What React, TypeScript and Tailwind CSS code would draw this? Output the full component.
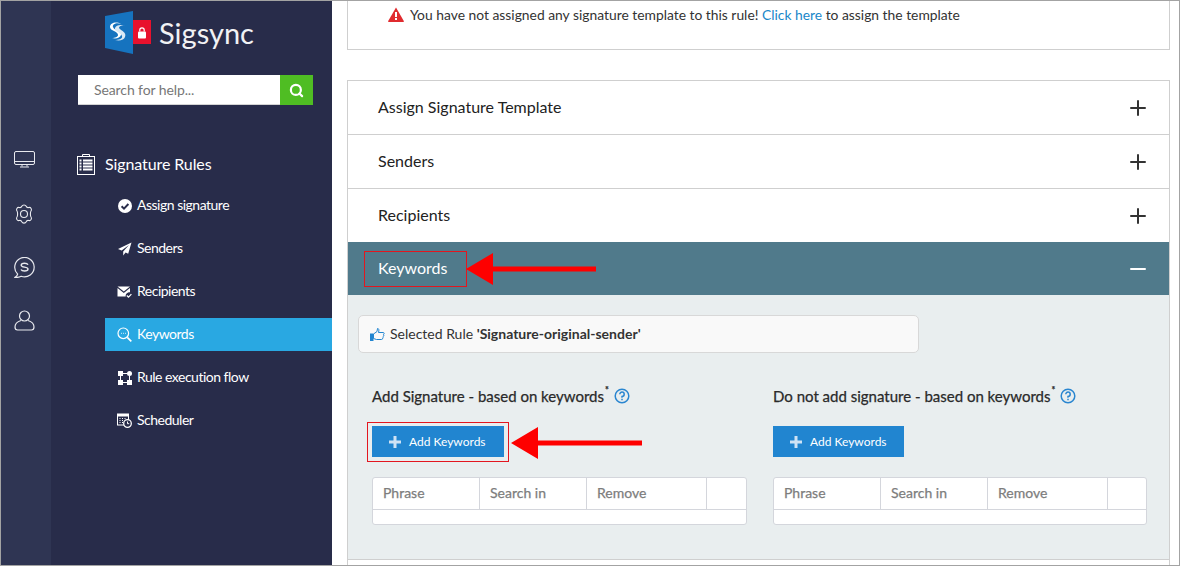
import React from "react";
import { Plus, Minus, Search } from "lucide-react";

const NavIcon = ({ name }: { name: string }) => {
  switch (name) {
    case "check":
      return (
        <svg width="14" height="14" viewBox="0 0 14 14">
          <circle cx="7" cy="7" r="7" fill="#fff" />
          <path d="M3.6 7.2 6 9.6l4.4-4.6" fill="none" stroke="#282c4a" strokeWidth="2" />
        </svg>
      );
    case "plane":
      return (
        <svg width="14" height="14" viewBox="0 0 14 14">
          <path d="M13.5.5 0 7l3.6 1.6L11 3 5.2 9.6V13.6l2.400-3 2.600 1.200z" fill="#fff" />
        </svg>
      );
    case "mail":
      return (
        <svg width="15" height="14" viewBox="0 0 15 14">
          <path d="M.5 1.500h12.500L6.800 6.500z" fill="#fff" />
          <path d="M.5 3v8.500h8.200c-.3-2.500 1.500-4.300 4.300-4.300V3L6.800 8z" fill="#fff" />
          <path d="M9.800 10.500l1.700 1.700 2.900-3" fill="none" stroke="#fff" strokeWidth="1.200" />
        </svg>
      );
    case "search":
      return (
        <svg width="15" height="15" viewBox="0 0 15 15" fill="none" stroke="#fff">
          <circle cx="6.300" cy="6.300" r="5.300" strokeWidth="1.200" />
          <path d="m10.300 10.300 4 4" strokeWidth="1.700" />
          <path d="M4 6.300h.8M6 6.300h.8M8 6.300h.8" strokeWidth="1" />
        </svg>
      );
    case "flow":
      return (
        <svg width="14" height="14" viewBox="0 0 14 14" fill="#fff">
          <rect x="0" y="0" width="5" height="5" />
          <circle cx="11.500" cy="2.500" r="2.500" />
          <rect x="0" y="9" width="5" height="5" />
          <rect x="9" y="9" width="5" height="5" />
          <rect x="5" y="2" width="4" height="1" />
          <rect x="2" y="5" width="1" height="4" />
          <rect x="5" y="11" width="4" height="1" />
          <rect x="11" y="5" width="1" height="4" />
        </svg>
      );
    default:
      return (
        <svg width="15" height="15" viewBox="0 0 15 15">
          <rect x=".5" y="1" width="11" height="11" fill="none" stroke="#fff" />
          <rect x=".5" y="1" width="11" height="2.500" fill="#fff" />
          <path d="M2.500 5.500h1M5 5.500h1M7.500 5.500h1M2.500 7.500h1M5 7.500h1M2.500 9.500h1M5 9.500h1" stroke="#fff" />
          <circle cx="10.500" cy="10.500" r="3.800" fill="#282c4a" stroke="#fff" strokeWidth="1.300" />
          <path d="M10.500 8.500v2.200h1.700" fill="none" stroke="#fff" />
        </svg>
      );
  }
};

const Rail = () => (
  <div className="w-[50px] shrink-0 bg-[#2f3553] flex flex-col items-center pt-[131px] pr-[4px]">
    <div className="h-[54px] flex items-center">
      <svg width="21" height="17" viewBox="0 0 21 17" fill="none" stroke="#e8e9ee" strokeWidth="1">
        <rect x=".5" y=".5" width="20" height="13" rx="1.500" />
        <path d="M.5 10.500h20M8 14v1.500M13 14v1.500M6 16h9" />
      </svg>
    </div>
    <div className="h-[53px] mt-[1px] flex items-center">
      <svg width="18" height="20" viewBox="0 0 18 20" fill="none" stroke="#e8e9ee" strokeWidth="1.100">
        <path d="M6.800 2.200C7.500.5 10.500.5 11.200 2.200 11.600 3.300 12.800 3.800 13.900 3.500 15.700 3 17.300 5.600 16 7 15.200 7.900 15.200 12.100 16 13 17.300 14.400 15.700 17 13.900 16.500 12.800 16.200 11.600 16.700 11.200 17.800 10.500 19.500 7.500 19.500 6.800 17.800 6.400 16.700 5.200 16.200 4.100 16.500 2.300 17 .7 14.400 2 13 2.800 12.100 2.800 7.900 2 7 .7 5.600 2.300 3 4.100 3.500 5.200 3.800 6.400 3.300 6.800 2.200z" />
        <circle cx="9" cy="10" r="3.500" />
      </svg>
    </div>
    <div className="h-[54px] flex items-center">
      <svg width="21" height="21" viewBox="0 0 21 21" fill="none" stroke="#e8e9ee" strokeWidth="1.200">
        <path d="M3.640 17.060A9.700 9.700 0 1 1 7.200 19.300C5.500 20.300 3 20.600 1 20.300 2.500 19.500 3.400 18.500 3.640 17.060z" />
        <path d="M14 7.800C13.500 6.700 12.200 6.300 10.500 6.300 8.500 6.300 7.200 7 7.200 8.200 7.200 10.800 14 9.400 14 12.100 14 13.300 12.600 14 10.500 14 8.800 14 7.500 13.500 7 12.500" strokeWidth="1.400" />
      </svg>
    </div>
    <div className="h-[53px] flex items-center">
      <svg width="21" height="21" viewBox="0 0 21 21" fill="none" stroke="#e8e9ee" strokeWidth="1.200">
        <circle cx="10.500" cy="6" r="5" />
        <path d="M7 10.500C3.500 11.500 1 13.500 1 17c0 1.800 1 3 2.500 3h14c1.500 0 2.500-1.200 2.500-3 0-3.500-2.500-5.500-6-6.500" />
      </svg>
    </div>
  </div>
);

const items = [
  { n: "check", t: "Assign signature" },
  { n: "plane", t: "Senders" },
  { n: "mail", t: "Recipients" },
  { n: "search", t: "Keywords", active: true },
  { n: "flow", t: "Rule execution flow" },
  { n: "clock", t: "Scheduler" },
];

const Sidebar = () => (
  <div className="w-[281px] shrink-0 bg-[#282c4a] flex flex-col text-white">
    <div className="flex items-center pl-[54px] h-[53px] pt-[9px]">
      <svg width="47" height="43" viewBox="0 0 47 43" className="shrink-0">
        <path d="M0 5 28 0v43L0 37z" fill="#1673bf" />
        <path d="M16 13c-4-2-9 0-8 3 1 4 9 3 8 8-1 3-5 4-9 3 3 0 6-1 6-3 0-4-8-4-8-8 0-4 6-6 11-3z" fill="#fff" />
        <path d="M20 15c-3-1-6 0-6 2 2 3 8 4 6 9-1 3-5 4-10 3 3 0 8-1 7-4-1-4-8-4-7-8 1-3 6-4 10-2z" fill="#dbe9f5" />
        <rect x="28" y="9" width="18" height="24" fill="#e8112d" />
        <rect x="33" y="20.500" width="8" height="7" rx="1" fill="#fff" />
        <path d="M34.800 20.500v-1.500a2.200 2.200 0 0 1 4.400 0v1.500" fill="none" stroke="#fff" strokeWidth="1.200" />
      </svg>
      <span className="ml-[7px] text-[29px] leading-none text-[#f1f2f5]">Sigsync</span>
    </div>
    <div className="mt-[21px] ml-[27px] flex h-[30px] w-[235px]">
      <div className="flex-1 bg-white border-b border-[#d4d4d4] flex items-center pl-[16px] pb-[1px] text-[14px] tracking-[-0.1px] text-[#777]">Search for help...</div>
      <div className="w-[33px] bg-[#4fbd23] flex items-center justify-center">
        <Search size={15} strokeWidth={3.500} color="#fff" />
      </div>
    </div>
    <div className="mt-[48px] ml-[26px] flex items-center h-[22px] gap-[10px]">
      <svg width="18" height="21" viewBox="0 0 18 21" fill="none" stroke="#fff">
        <rect x=".5" y="2.500" width="17" height="18" />
        <path d="M5.500 2.500V.5h7v2" />
        <path d="M2.500 6.500h2M6 6.500h9.500M2.500 9.500h2M6 9.500h9.500M2.500 12.500h2M6 12.500h9.500M2.500 15.500h2M6 15.500h9.500" strokeWidth="1.800" />
      </svg>
      <span className="text-[16px] tracking-[-0.1px]">Signature Rules</span>
    </div>
    <div className="mt-[14px] ml-[54px] flex flex-col gap-[10px]">
      {items.map((i) => (
        <div key={i.t} className={`h-[33px] flex items-center pl-[12px] gap-[5px] text-[14px] tracking-[-0.5px] ${i.active ? "bg-[#29a8e2]" : ""}`}>
          <span className="w-[15px] flex justify-center shrink-0"><NavIcon name={i.n} /></span>
          <span className="pb-[2px]">{i.t}</span>
        </div>
      ))}
    </div>
  </div>
);

const Row = ({ t }: { t: string }) => (
  <div className="h-[54px] border-b border-[#cfcfcf] bg-white flex items-center justify-between pl-[30px] pr-[19px] text-[16px] text-[#222]">
    <span className="pb-[2px]">{t}</span>
    <Plus size={24} strokeWidth={2} color="#333" />
  </div>
);

const Column = ({ title, boxed, width }: { title: string; boxed?: boolean; width: string }) => (
  <div className={width}>
    <div className="flex items-center h-[24px] text-[15px] [-webkit-text-stroke:0.25px] text-[#2a2a2a]">
      <span>{title}</span>
      <sup className="text-[9px] -mt-[3px] ml-[1px] font-bold">*</sup>
      <svg width="16" height="16" viewBox="0 0 16 16" fill="none" stroke="#2a86d0" className="ml-[5px]">
        <circle cx="8" cy="8" r="6.800" strokeWidth="1.500" />
        <path d="M5.800 6.300A2.200 2.200 0 1 1 8 8.500v1.200" strokeWidth="1.500" />
        <path d="M8 10.800v1.500" strokeWidth="1.500" />
      </svg>
    </div>
    <div className={`mt-[18px] relative h-[31px] bg-[#2185d0] flex items-center pl-[17px] gap-[8px] text-white text-[12px] ${boxed ? "w-[132px]" : "w-[131px]"}`}>
      <svg width="12" height="12" viewBox="0 0 12 12" fill="#cfe3f5"><path d="M4.500 0h3v4.500H12v3H7.500V12h-3V7.500H0v-3h4.500z" /></svg>
      <span>Add Keywords</span>
      {boxed && (
        <>
          <div className="absolute -left-[5px] -top-[4px] w-[142px] h-[40px] border border-[#e3161f]" />
          <Arrow className="absolute left-[139px] top-[1px]" w={131} />
        </>
      )}
    </div>
    <div className="mt-[20px] h-[48px] rounded-[3px] border border-[#d4d6dc] bg-white overflow-hidden">
      <div className="flex h-[32px] border-b border-[#d4d6dc] text-[14px] [-webkit-text-stroke:0.25px] text-[#7d7d7d]">
        <div className="w-[107px] border-r border-[#d4d6dc] pl-[10px] pb-[3px] flex items-center">Phrase</div>
        <div className="w-[107px] border-r border-[#d4d6dc] pl-[10px] pb-[3px] flex items-center">Search in</div>
        <div className="w-[120px] border-r border-[#d4d6dc] pl-[10px] pb-[3px] flex items-center">Remove</div>
      </div>
    </div>
  </div>
);

const Arrow = ({ className, w }: { className: string; w: number }) => (
  <svg width={w} height="32" viewBox={`0 0 ${w} 32`} className={className}>
    <path d={`M0 16 27 0v13.500H${w}v5H27V32z`} fill="#fe0000" />
  </svg>
);

export default function App() {
  return (
    <div className="w-[1180px] h-[566px] border border-[#a3a3a3] flex overflow-hidden bg-white" style={{ fontFamily: "Lato, 'Open Sans', sans-serif" }}>
      <Rail />
      <Sidebar />
      <div className="flex-1 pl-[15px] pr-[9px] min-w-0">
        <div className="h-[49px] border border-t-0 border-[#cfcfcf] flex items-start pl-[40px] pt-[4px] text-[13.850px] text-[#333] gap-[6px]">
          <svg width="16" height="15" viewBox="0 0 16 15" className="shrink-0 mt-[2px]">
            <path d="M8 .5 15.800 14a.7.7 0 0 1-.6 1H.8a.7.7 0 0 1-.6-1z" fill="#e02b2f" />
            <path d="M7 5h2v5H7zM7 11h2v2H7z" fill="#fff" />
          </svg>
          <span>You have not assigned any signature template to this rule! <span className="text-[#1a87c9]">Click here</span> to assign the template</span>
        </div>
        <div className="mt-[30px] border border-b-0 border-[#cfcfcf]">
          <Row t="Assign Signature Template" />
          <Row t="Senders" />
          <Row t="Recipients" />
          <div className="relative h-[53px] -mt-[1px] bg-[#507a8b] flex items-center justify-between pl-[30px] pr-[19px] text-white text-[16px]">
            <span className="pb-[2px]">Keywords</span>
            <Minus size={24} strokeWidth={2} color="#fff" />
            <div className="absolute left-[16px] top-[9px] w-[103px] h-[36px] border border-[#e3161f]" />
            <Arrow className="absolute left-[118px] top-[11px]" w={130} />
          </div>
          <div className="h-[265px] bg-[#e9eeef] border-b border-[#cfcfcf] pt-[20px] px-[10px]">
            <div className="w-[561px] h-[38px] rounded-[5px] border border-[#d8d8d8] bg-[#f9f9f9] flex items-center pl-[11px] gap-[5px] text-[14px] text-[#333]">
              <svg width="15" height="13" viewBox="0 0 15 13" className="shrink-0">
                <path d="M0 5.500h3.500V13H0z" fill="#2185d0" />
                <path d="M3.500 6 7 3.500 7.500.5c1.500 0 1.700 1.500 1 4h4.700c1.300 0 1.300 1.800.2 2 .7.500.5 1.600-.3 1.800.4.700.2 1.500-.5 1.700.2 1-.3 1.500-1.200 1.500H6.500l-3-1z" fill="none" stroke="#2185d0" />
              </svg>
              <span className="pb-[2px]">Selected Rule <b className="font-bold">'Signature-original-sender'</b></span>
            </div>
            <div className="mt-[31px] pl-[14px] flex gap-[26px]">
              <Column title="Add Signature - based on keywords" boxed width="w-[375px]" />
              <Column title="Do not add signature - based on keywords" width="w-[374px]" />
            </div>
          </div>
          <div className="h-[20px] bg-white" />
        </div>
      </div>
    </div>
  );
}
